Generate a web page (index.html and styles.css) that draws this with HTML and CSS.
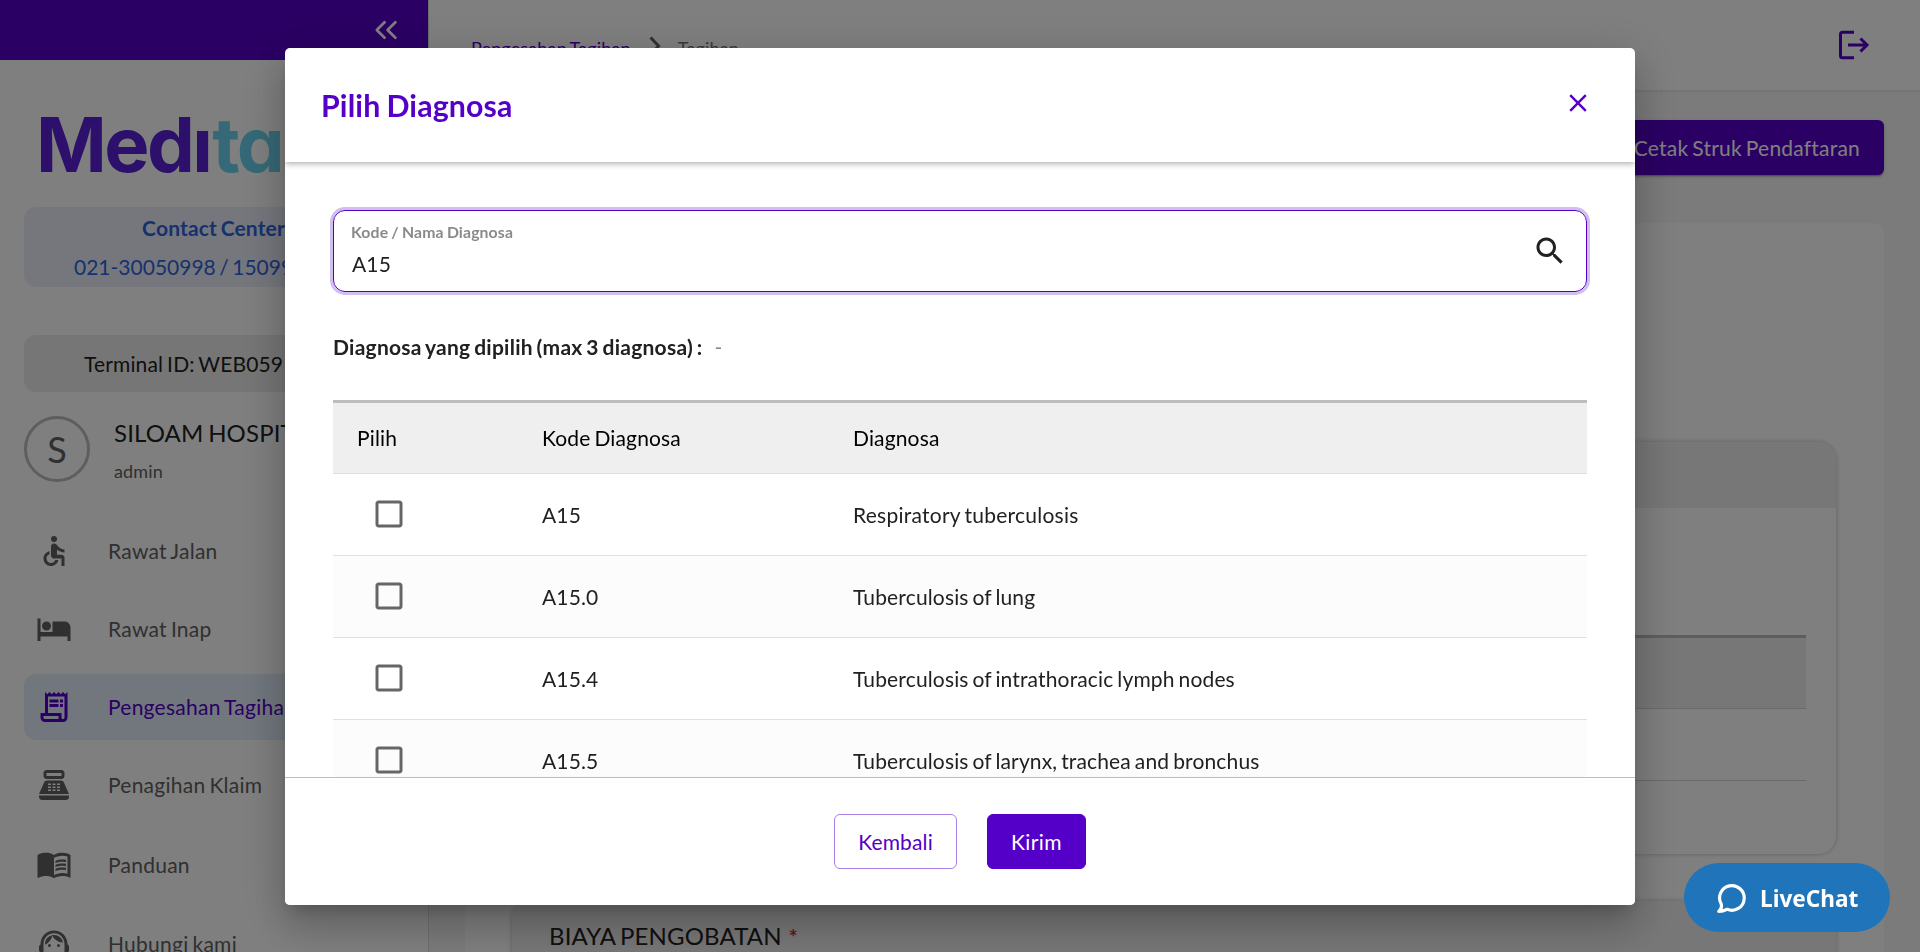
FILE: index.html
```html
<!DOCTYPE html>
<html lang="id">
<head>
<meta charset="utf-8">
<title>Pilih Diagnosa</title>
<link rel="stylesheet" href="styles.css">
</head>
<body>
<div class="app">
  <aside class="sidebar">
    <div class="sidebar-top">
      <svg class="collapse" viewBox="0 0 24 20"><path d="M10.6 2.2 2.8 10l7.8 7.8M21.4 2.2 13.6 10l7.8 7.8"/></svg>
    </div>
    <div class="logo"><span class="logo-a">Medı</span><span class="logo-b">ta</span></div>
    <div class="contact"><b>Contact Center</b><span class="phone">021-30050998 / 15099</span></div>
    <div class="terminal">Terminal ID: WEB059</div>
    <div class="user">
      <div class="avatar">S</div>
      <div class="user-text"><div class="user-name">SILOAM HOSPITAL</div><div class="user-role">admin</div></div>
    </div>
    <nav class="menu">
      <a class="item"><svg class="icon" viewBox="0 0 24 24"><circle cx="12" cy="4" r="2"/><path d="M19 13v-2c-1.54.02-3.09-.75-4.07-1.83l-1.29-1.43c-.17-.19-.38-.34-.61-.45-.01 0-.01-.01-.02-.01H13c-.35-.2-.75-.3-1.19-.26C10.76 7.11 10 8.04 10 9.09V15c0 1.1.9 2 2 2h5v5h2v-5.5c0-1.1-.9-2-2-2h-3v-3.45c1.29 1.07 3.25 1.94 5 1.95zm-6.17 5c-.41 1.16-1.52 2-2.83 2-1.66 0-3-1.34-3-3 0-1.31.84-2.41 2-2.83V12.1c-2.28.46-4 2.48-4 4.9 0 2.76 2.24 5 5 5 2.42 0 4.44-1.72 4.9-4h-2.07z"/></svg><span>Rawat Jalan</span></a>
      <a class="item"><svg class="icon" viewBox="0 0 24 24"><path d="M7 13c1.66 0 3-1.34 3-3S8.66 7 7 7s-3 1.34-3 3 1.34 3 3 3zm12-6h-8v7H3V5H1v15h2v-3h18v3h2v-9c0-2.21-1.79-4-4-4z"/></svg><span>Rawat Inap</span></a>
      <a class="item active"><svg class="icon" viewBox="0 0 24 24"><path d="M19.5 3.5 18 2l-1.5 1.5L15 2l-1.5 1.5L12 2l-1.5 1.5L9 2 7.5 3.5 6 2v14H3v3c0 1.66 1.34 3 3 3h12c1.66 0 3-1.34 3-3V2l-1.5 1.5zM15 20H6c-.55 0-1-.45-1-1v-1h10v2zm4-1c0 .55-.45 1-1 1s-1-.45-1-1v-3H8V5h11v14z"/><path d="M9 7h6v2H9zm7 0h2v2h-2zm-7 3h6v2H9zm7 0h2v2h-2z"/></svg><span>Pengesahan Tagihan</span></a>
      <a class="item"><svg class="icon" viewBox="0 0 24 24"><path fill-rule="evenodd" d="M17 2H7c-1.1 0-2 .9-2 2v2c0 1.1.9 2 2 2h10c1.1 0 2-.9 2-2V4c0-1.1-.9-2-2-2zm0 4H7V4h10v2zm3 16H4c-1.1 0-2-.9-2-2v-1h20v1c0 1.1-.9 2-2 2zm-1.47-11.81C18.21 9.47 17.49 9 16.7 9H7.3c-.79 0-1.51.47-1.83 1.19L2 18h20l-3.47-7.81zM8 11h2v1H8zM11 11h2v1h-2zM14 11h2v1h-2zM8 13h2v1H8zM11 13h2v1h-2zM14 13h2v1h-2zM8 15h2v1H8zM11 15h2v1h-2zM14 15h2v1h-2z"/></svg><span>Penagihan Klaim</span></a>
      <a class="item guide"><svg class="icon" viewBox="0 0 24 24"><path d="M21 5c-1.11-.35-2.33-.5-3.5-.5-1.95 0-4.05.4-5.5 1.5-1.45-1.1-3.55-1.5-5.5-1.5S2.45 4.9 1 6v14.65c0 .25.25.5.5.5.1 0 .15-.05.25-.05C3.1 20.45 5.05 20 6.5 20c1.95 0 4.05.4 5.5 1.5 1.35-.85 3.8-1.5 5.5-1.5 1.65 0 3.35.3 4.75 1.05.1.05.15.05.25.05.25 0 .5-.25.5-.5V6c-.6-.45-1.25-.75-2-1zm0 13.5c-1.1-.35-2.3-.5-3.5-.5-1.7 0-4.15.65-5.5 1.5V8c1.35-.85 3.8-1.5 5.5-1.5 1.2 0 2.4.15 3.5.5v11.5z"/><path d="M17.5 10.5c.88 0 1.73.09 2.5.26V9.24c-.79-.15-1.64-.24-2.5-.24-1.7 0-3.24.29-4.5.83v1.66c1.13-.64 2.7-.99 4.5-.99zM13 12.49v1.66c1.13-.64 2.7-.99 4.5-.99.88 0 1.73.09 2.5.26V11.9c-.79-.15-1.64-.24-2.5-.24-1.7 0-3.24.3-4.5.83zM17.5 14.33c-1.7 0-3.24.29-4.5.83v1.66c1.13-.64 2.7-.99 4.5-.99.88 0 1.73.09 2.5.26v-1.52c-.79-.16-1.64-.24-2.5-.24z"/></svg><span>Panduan</span></a>
      <a class="item help"><svg class="icon" viewBox="0 0 24 24"><path d="M21 12.22C21 6.73 16.74 3 12 3c-4.69 0-9 3.65-9 9.28-.6.34-1 .98-1 1.72v2c0 1.1.9 2 2 2h1v-6.1c0-3.87 3.13-7 7-7s7 3.13 7 7V19h-8v2h8c1.1 0 2-.9 2-2v-1.22c.59-.31 1-.92 1-1.64v-2.3c0-.7-.41-1.31-1-1.62z"/><circle cx="9" cy="13" r="1"/><circle cx="15" cy="13" r="1"/><path d="M18 11.03C17.52 8.18 15.04 6 12.05 6c-3.03 0-6.29 2.51-6.03 6.45 2.47-1.01 4.33-3.21 4.86-5.89 1.31 2.63 4 4.44 7.12 4.47z"/></svg><span>Hubungi kami</span></a>
    </nav>
  </aside>
  <main class="main">
    <header class="topbar">
      <div class="crumbs"><span class="crumb-link">Pengesahan Tagihan</span><svg class="crumb-sep" viewBox="0 0 12 20"><path d="M1.6 1.5 9.6 10l-8 8.5"/></svg><span>Tagihan</span></div>
      <svg class="logout" viewBox="0 0 32 30"><path d="M16 2.3H4.5a2 2 0 0 0-2 2v21.4a2 2 0 0 0 2 2H16M10 15h19.5M22.5 8.5 29 15l-6.5 6.5"/></svg>
    </header>
    <div class="toolbar"><button class="print">Cetak Struk Pendaftaran</button></div>
    <section class="sheet">
      <div class="panel">
        <div class="panel-head"></div>
        <div class="panel-body"><div class="mini-head"></div><div class="mini-row"></div></div>
      </div>
      <div class="panel cost"><div class="panel-head cost-head">BIAYA PENGOBATAN<span class="req">*</span></div></div>
    </section>
  </main>
</div>

<div class="backdrop">
  <div class="dialog">
    <header class="dialog-head">
      <h2 class="dialog-title">Pilih Diagnosa</h2>
      <svg class="close" viewBox="0 0 18 18"><path d="M1.2 1.2l15.6 15.6M16.8 1.2 1.2 16.8"/></svg>
    </header>
    <div class="dialog-body">
      <div class="field">
        <div><div class="field-label">Kode / Nama Diagnosa</div><div class="field-value">A15</div></div>
        <svg class="search" viewBox="0 0 24 24"><path d="M15.5 14h-.79l-.28-.27C15.41 12.59 16 11.11 16 9.5 16 5.91 13.09 3 9.5 3S3 5.91 3 9.5 5.91 16 9.5 16c1.61 0 3.09-.59 4.23-1.57l.27.28v.79l5 4.99L20.49 19l-4.99-5zm-6 0C7.01 14 5 11.99 5 9.5S7.01 5 9.5 5 14 7.01 14 9.5 11.99 14 9.5 14z"/></svg>
      </div>
      <div class="chosen"><b>Diagnosa yang dipilih (max 3 diagnosa) :</b><span class="none">-</span></div>
      <div class="table">
        <div class="row head"><span>Pilih</span><span>Kode Diagnosa</span><span>Diagnosa</span></div>
        <div class="row"><span class="pick"><svg class="box" viewBox="0 0 24 24"><path d="M19 5v14H5V5h14m0-2H5c-1.1 0-2 .9-2 2v14c0 1.1.9 2 2 2h14c1.1 0 2-.9 2-2V5c0-1.1-.9-2-2-2z"/></svg></span><span>A15</span><span class="wide">Respiratory tuberculosis</span></div>
        <div class="row alt"><span class="pick"><svg class="box" viewBox="0 0 24 24"><path d="M19 5v14H5V5h14m0-2H5c-1.1 0-2 .9-2 2v14c0 1.1.9 2 2 2h14c1.1 0 2-.9 2-2V5c0-1.1-.9-2-2-2z"/></svg></span><span>A15.0</span><span>Tuberculosis of lung</span></div>
        <div class="row"><span class="pick"><svg class="box" viewBox="0 0 24 24"><path d="M19 5v14H5V5h14m0-2H5c-1.1 0-2 .9-2 2v14c0 1.1.9 2 2 2h14c1.1 0 2-.9 2-2V5c0-1.1-.9-2-2-2z"/></svg></span><span>A15.4</span><span>Tuberculosis of intrathoracic lymph nodes</span></div>
        <div class="row alt"><span class="pick"><svg class="box" viewBox="0 0 24 24"><path d="M19 5v14H5V5h14m0-2H5c-1.1 0-2 .9-2 2v14c0 1.1.9 2 2 2h14c1.1 0 2-.9 2-2V5c0-1.1-.9-2-2-2z"/></svg></span><span>A15.5</span><span>Tuberculosis of larynx, trachea and bronchus</span></div>
      </div>
    </div>
    <footer class="dialog-foot"><button class="btn outline">Kembali</button><button class="btn solid">Kirim</button></footer>
  </div>
</div>

<div class="livechat">
  <svg class="bubble" viewBox="0 0 29 31"><path d="M4.2 21A12.3 12.3 0 1 1 10.2 26.3C7.500 27.500 5 28.600 1.800 28.300 4 26.500 5 24 4.200 21z"/></svg>
  <span>LiveChat</span>
</div>
</body>
</html>
```

FILE: styles.css
```css
* { box-sizing: border-box; }
body {
  margin: 0;
  height: 952px;
  overflow: hidden;
  font-family: Lato, "Liberation Sans", sans-serif;
  font-size: 21px;
  letter-spacing: .007em;
  word-spacing: -.075em;
  color: #212121;
}
button { font: inherit; letter-spacing: inherit; word-spacing: inherit; margin: 0; }
.app { display: flex; height: 952px; overflow: hidden; }

/* Sidebar */
.sidebar { width: 429px; flex: none; background: #fff; border-right: 1px solid #e0e0e0; overflow: hidden; }
.sidebar-top { height: 60px; background: #5500c8; display: flex; align-items: center; justify-content: flex-end; padding-right: 31px; margin-right: -1px; }
.collapse { width: 24px; height: 20px; fill: none; stroke: #fff; stroke-width: 2.7; stroke-linecap: round; stroke-linejoin: round; }
.logo { height: 147px; padding: 39px 0 0 36px; font: 700 76px/90px Inter, Lato, sans-serif; font-feature-settings: "cv11"; letter-spacing: -2.6px; white-space: nowrap; }
.logo-a { color: #5b21d6; }
.logo-b { color: #6ad3ee; margin-left: 2px; }
.contact { margin: 0 24px; height: 80px; border-radius: 12px; background: #edeffa; color: #2b64de; display: flex; flex-direction: column; align-items: center; padding-top: 2px; line-height: 38.5px; white-space: nowrap; }
.contact b { margin-right: 1px; }
.phone { align-self: flex-start; padding-left: 50px; letter-spacing: 0; word-spacing: -.09em; }
.terminal { margin: 48px 24px 0; height: 57px; border-radius: 12px; background: #ececec; line-height: 58px; padding-left: 60px; white-space: nowrap; }
.user { margin: 24px 24px 0; display: flex; gap: 24px; height: 66px; }
.avatar { width: 66px; height: 66px; flex: none; border: 3px solid #bdbdbd; border-radius: 50%; display: flex; align-items: center; justify-content: center; font-size: 36px; color: #616161; }
.user-name { font-size: 24px; line-height: 34px; white-space: nowrap; }
.user-role { font-size: 18px; line-height: 26px; padding-top: 8px; color: #616161; }
.menu { margin: 36px 24px 0; display: flex; flex-direction: column; gap: 12px; }
.item { height: 66px; flex: none; display: flex; align-items: center; gap: 36px; padding-left: 12px; border-radius: 12px; color: #616161; white-space: nowrap; letter-spacing: .012em; }
.item span { margin-bottom: 2px; }
.icon { width: 36px; height: 36px; fill: currentColor; flex: none; }
.item.active { background: #e2effa; color: #5500c8; }
.guide { margin-top: 1px; }
.guide span { margin-bottom: 0; }
.help { margin-top: 2px; }

/* Main page */
.main { flex: 1; background: #f7f7f7; }
.topbar { height: 90px; background: #fff; box-shadow: 0 1px 3px rgba(0,0,0,.1); display: flex; justify-content: space-between; align-items: center; padding: 0 50px 0 42px; }
.crumbs { display: flex; align-items: center; font-size: 18px; color: #757575; padding-top: 5px; }
.crumb-link { color: #5500c8; }
.crumb-sep { width: 12px; height: 20px; margin: 0 17px 4px 18px; fill: none; stroke: #616161; stroke-width: 3; }
.logout { width: 32px; height: 30px; fill: none; stroke: #5500c8; stroke-width: 3; }
.toolbar { display: flex; justify-content: flex-end; padding: 30px 36px 0 0; }
.print { width: 280px; height: 55px; border: 0; border-radius: 6px; background: #5500c8; color: #fff; padding: 0 24px; text-align: right; white-space: nowrap; letter-spacing: .01em; box-shadow: 0 3px 1px -2px rgba(0,0,0,.2), 0 2px 2px rgba(0,0,0,.14), 0 1px 5px rgba(0,0,0,.12); }
.sheet { margin: 48px 36px 0; background: #fff; border-radius: 12px; height: 800px; padding: 219px 48px 0 47px; }
.panel { height: 412px; border-radius: 18px; background: #fff; box-shadow: 0 0 5px rgba(0,0,0,.25); overflow: hidden; }
.panel-head { height: 66px; background: #efefef; }
.panel-body { padding: 127px 30px 0; }
.mini-head { height: 74px; background: #efefef; border-top: 3px solid #bdbdbd; border-bottom: 1px solid #d5d5d5; }
.mini-row { height: 72px; border-bottom: 1px solid #d5d5d5; }
.cost { margin-top: 47px; }
.cost-head { height: 100px; padding: 13px 0 0 37px; font-size: 24px; line-height: 44px; }
.req { color: #d32f2f; font-size: 21px; font-weight: 700; margin-left: 7px; }

/* Dialog */
.backdrop { position: fixed; inset: 0; background: rgba(0,0,0,.5); display: flex; justify-content: center; align-items: flex-start; padding-top: 48px; }
.dialog { width: 1350px; height: 857px; background: #fff; border-radius: 5px; overflow: hidden; display: flex; flex-direction: column; box-shadow: 0 11px 15px -7px rgba(0,0,0,.2), 0 24px 38px 3px rgba(0,0,0,.14), 0 9px 46px 8px rgba(0,0,0,.12); }
.dialog-head { height: 114px; flex: none; display: flex; justify-content: space-between; align-items: center; padding: 0 48px 0 36px; box-shadow: 0 2px 6px rgba(0,0,0,.3); }
.dialog-title { margin: 0; font-size: 30.3px; font-weight: 700; color: #5500c8; }
.close { width: 18px; height: 18px; margin-bottom: 4px; fill: none; stroke: #5500c8; stroke-width: 2.4; }
.dialog-body { flex: 1; min-height: 0; overflow: hidden; padding: 48px 48px 0; }
.field { height: 82px; border: 1px solid #5500c8; border-radius: 12px; box-shadow: 0 0 0 3px #d1bff0; display: flex; justify-content: space-between; align-items: center; padding: 0 18px; }
.field-label { font-size: 15.75px; font-weight: 700; line-height: 24px; color: #8a8a8a; letter-spacing: .009em; word-spacing: -.05em; margin: 1px 0 0 -1px; }
.field-value { line-height: 40px; }
.search { width: 36px; height: 36px; fill: #212121; }
.chosen { display: flex; gap: 12px; margin-top: 40px; line-height: 30px; letter-spacing: .012em; }
.none { color: #8a8a8a; }
.table { margin-top: 38px; border-top: 3px solid #bdbdbd; }
.row { display: grid; grid-template-columns: 185px 311px 1fr; align-items: center; height: 82px; border-bottom: 1px solid #e0e0e0; }
.row > span { padding-left: 24px; }
.row > .wide { letter-spacing: .012em; }
.head { height: 71px; background: #efefef; color: #000; padding-bottom: 2px; }
.alt { background: #fcfcfc; }
.row > .pick { display: flex; padding: 0 0 2px 38px; }
.box { width: 36px; height: 36px; fill: #666; }
.dialog-foot { height: 128px; flex: none; border-top: 1px solid #bdbdbd; display: flex; justify-content: center; align-items: flex-start; gap: 30px; padding-top: 36px; background: #fff; }
.btn { height: 55px; border-radius: 6px; padding: 0; border: 1px solid #5500c8; }
.outline { width: 123px; background: #fff; color: #5500c8; border-color: #aa80e4; }
.solid { width: 99px; background: #5500c8; color: #fff; letter-spacing: .02em; }

/* Chat launcher */
.livechat { position: fixed; left: 1684px; top: 863px; width: 206px; height: 69px; border-radius: 35px; background: #2075ba; color: #fff; display: flex; align-items: center; gap: 14px; padding: 2px 0 0 33px; font: 700 22.6px "Noto Sans", "Open Sans", sans-serif; letter-spacing: 0; }
.bubble { width: 29px; height: 31px; fill: none; stroke: #fff; stroke-width: 3.2; stroke-linejoin: round; }
```
